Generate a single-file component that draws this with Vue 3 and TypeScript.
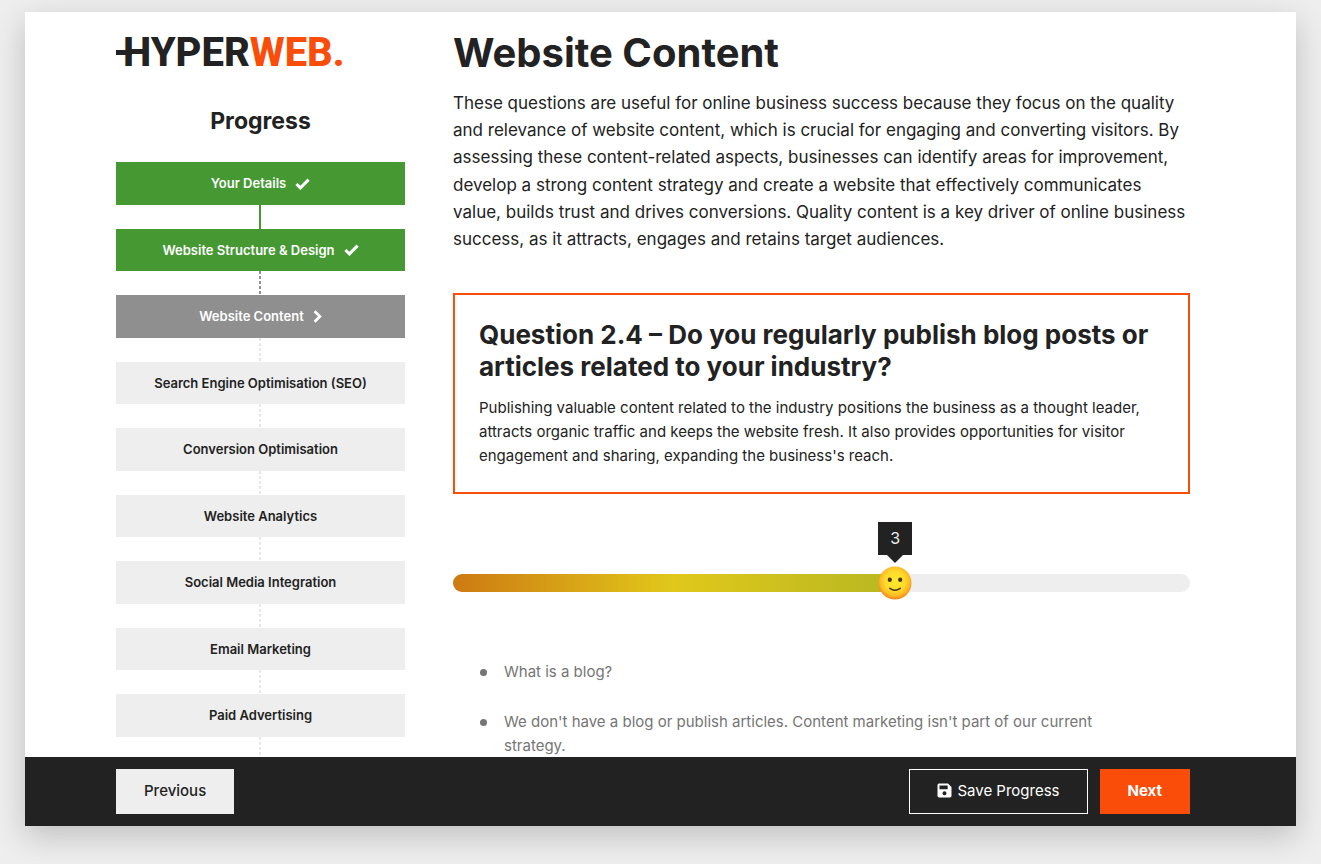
<script setup lang="ts">
import { computed, ref } from 'vue'

type Status = 'done' | 'current' | 'todo'

interface Step {
  label: string
  status: Status
}

const steps: Step[] = [
  { label: 'Your Details', status: 'done' },
  { label: 'Website Structure & Design', status: 'done' },
  { label: 'Website Content', status: 'current' },
  { label: 'Search Engine Optimisation (SEO)', status: 'todo' },
  { label: 'Conversion Optimisation', status: 'todo' },
  { label: 'Website Analytics', status: 'todo' },
  { label: 'Social Media Integration', status: 'todo' },
  { label: 'Email Marketing', status: 'todo' },
  { label: 'Paid Advertising', status: 'todo' },
]

const answers: string[] = [
  'What is a blog?',
  "We don't have a blog or publish articles. Content marketing isn't part of our current strategy.",
]

const maxScore = 5
const score = ref(3)
const percent = computed(() => `${(score.value / maxScore) * 100}%`)
</script>

<template>
  <div class="page">
    <div class="card">
      <div class="content">
        <aside class="sidebar">
          <a class="logo" href="#" aria-label="Hyperweb home">HYPER<span class="logo-accent">WEB.</span></a>
          <h2 class="progress-title">Progress</h2>
          <ol class="steps">
            <li v-for="step in steps" :key="step.label" class="step" :class="step.status">
              <a class="step-link" href="#">
                <span>{{ step.label }}</span>
                <svg v-if="step.status === 'done'" class="tick" viewBox="0 0 15 12" aria-hidden="true">
                  <path d="M1.4 6 5.4 9.9 13.6 1.7" fill="none" stroke="currentColor" stroke-width="3.1" />
                </svg>
                <svg v-else-if="step.status === 'current'" class="chevron" viewBox="0 0 9 13" aria-hidden="true">
                  <path d="M1.6 1.3 6.9 6.5 1.6 11.7" fill="none" stroke="currentColor" stroke-width="2.7" />
                </svg>
              </a>
            </li>
          </ol>
        </aside>

        <main class="main">
          <h1 class="title">Website Content</h1>
          <p class="intro">
            These questions are useful for online business success because they focus on the quality
            and relevance of website content, which is crucial for engaging and converting visitors. By
            assessing these content-related aspects, businesses can identify areas for improvement,
            develop a strong content strategy and create a website that effectively communicates
            value, builds trust and drives conversions. Quality content is a key driver of online business
            success, as it attracts, engages and retains target audiences.
          </p>

          <section class="question">
            <h2 id="question-title">Question 2.4 – Do you regularly publish blog posts or articles related to your industry?</h2>
            <p>
              Publishing valuable content related to the industry positions the business as a thought leader,
              attracts organic traffic and keeps the website fresh. It also provides opportunities for visitor
              engagement and sharing, expanding the business's reach.
            </p>
          </section>

          <div class="slider" :style="{ '--value': percent }">
            <input
              v-model.number="score"
              class="range"
              type="range"
              min="0"
              :max="maxScore"
              aria-labelledby="question-title"
            />
            <output class="bubble">{{ score }}</output>
            <svg class="face" viewBox="0 0 34 34" aria-hidden="true">
              <defs>
                <radialGradient id="skin" cx="50%" cy="44%" r="54%">
                  <stop offset="0" stop-color="#ffe92e" />
                  <stop offset="0.55" stop-color="#ffdb2c" />
                  <stop offset="0.82" stop-color="#fdbb25" />
                  <stop offset="1" stop-color="#f58a1c" />
                </radialGradient>
              </defs>
              <circle cx="17" cy="17" r="16.5" fill="url(#skin)" />
              <ellipse cx="11.8" cy="13.8" rx="2.1" ry="2.3" fill="#4a3306" />
              <ellipse cx="22.2" cy="13.8" rx="2.1" ry="2.3" fill="#4a3306" />
              <path d="M11.8 22.3Q17 26 22.2 22.3" fill="none" stroke="#4a3306" stroke-width="1.5" stroke-linecap="round" />
            </svg>
          </div>

          <ul class="answers">
            <li v-for="answer in answers" :key="answer">{{ answer }}</li>
          </ul>
        </main>
      </div>

      <footer class="footer">
        <button class="button previous" type="button">Previous</button>
        <div class="actions">
          <button class="button save" type="button">
            <svg class="disk" viewBox="0 0 15 15" aria-hidden="true">
              <path
                fill="currentColor"
                fill-rule="evenodd"
                d="M2 .5H11L14.5 4V13A1.6 1.6 0 0 1 13 14.5H2A1.6 1.6 0 0 1 .5 13V2A1.6 1.6 0 0 1 2 .5ZM2.5 2.5V6.2H10.7V2.5ZM7.5 8.3A2 2 0 1 0 7.5 12.3A2 2 0 1 0 7.5 8.3Z"
              />
            </svg>
            Save Progress
          </button>
          <button class="button next" type="button">Next</button>
        </div>
      </footer>
    </div>
  </div>
</template>

<style>
body {
  margin: 0;
  background: #eee;
}
</style>

<style scoped>
* {
  box-sizing: border-box;
}

.page {
  height: 100vh;
  padding: 12px 25px 38px;
  overflow: hidden;
  background: #eee;
  color: #222;
  font-family: Inter, "Liberation Sans", sans-serif;
}

.card {
  display: flex;
  flex-direction: column;
  height: 100%;
  background: #fff;
  box-shadow: 0 10px 30px rgba(0, 0, 0, 0.2);
}

.content {
  flex: 1;
  min-height: 0;
  display: grid;
  grid-template-columns: 289fr 737fr;
  align-items: start;
  gap: 48px;
  padding: 17px 106px 0 91px;
  overflow: hidden;
}

h1,
h2,
p,
ol,
ul {
  margin: 0;
  padding: 0;
}

.logo {
  position: relative;
  display: block;
  padding-left: 7px;
  color: #222;
  font: 800 40px/48px Roboto, "Liberation Sans", sans-serif;
  text-decoration: none;
  white-space: nowrap;
}

.logo::before {
  content: "";
  position: absolute;
  top: 21px;
  left: 0;
  width: 16px;
  height: 5px;
  background: #222;
}

.logo-accent {
  color: #fa4d09;
}

.progress-title {
  margin: 29px 0 26px;
  font-size: 23px;
  line-height: 30px;
  text-align: center;
}

.steps {
  list-style: none;
}

.step::after {
  content: "";
  display: block;
  width: 2px;
  height: 24px;
  margin-left: calc(50% - 2px);
  background: repeating-linear-gradient(#e8e8e8 0 3px, transparent 3px 5px);
}

.step.done::after {
  background: #459832;
}

.step.done:has(+ .current)::after {
  background: repeating-linear-gradient(#8f8f8f 0 3px, transparent 3px 5px);
}

.step-link {
  display: flex;
  align-items: center;
  justify-content: center;
  gap: 9px;
  padding: 12px 12px 11px;
  background: #eee;
  color: #222;
  font-size: 13px;
  font-weight: 600;
  line-height: 1.5;
  text-decoration: none;
}

.done .step-link {
  background: #459832;
  color: #fff;
}

.current .step-link {
  background: #8f8f8f;
  color: #fff;
}

.tick {
  width: 15px;
  height: 12px;
}

.chevron {
  width: 9px;
  height: 13px;
}

.title {
  font-size: 40px;
  line-height: 48px;
}

.intro {
  margin: 13px 0 40px;
  font-size: 17px;
  line-height: 1.6;
}

.question {
  padding: 24px;
  border: 2px solid #f94d0b;
}

.question h2 {
  margin-bottom: 13px;
  font-size: 26px;
  line-height: 32px;
}

.question p {
  font-size: 15px;
  line-height: 24px;
}

.slider {
  position: relative;
  height: 18px;
  margin: 80px 0 68px;
}

.range {
  display: block;
  width: 100%;
  height: 18px;
  margin: 0;
  appearance: none;
  border-radius: 9px;
  background:
    linear-gradient(90deg, transparent var(--value), #eee var(--value)),
    linear-gradient(90deg, #cd7a12, #e1c81b 30%, #b8b722 60%, #459832);
  cursor: pointer;
}

.range::-webkit-slider-thumb {
  appearance: none;
  width: 34px;
  height: 34px;
  background: transparent;
}

.bubble {
  position: absolute;
  bottom: 37px;
  left: var(--value);
  width: 34px;
  background: #222;
  color: #eee;
  font-size: 16px;
  line-height: 33px;
  text-align: center;
  transform: translateX(-50%);
  pointer-events: none;
}

.bubble::after {
  content: "";
  position: absolute;
  top: 100%;
  left: 50%;
  border: 8px solid transparent;
  border-top-color: #222;
  border-bottom: 0;
  transform: translateX(-50%);
}

.face {
  position: absolute;
  top: 50%;
  left: var(--value);
  width: 34px;
  height: 34px;
  transform: translate(-50%, -50%);
  pointer-events: none;
}

.answers {
  display: grid;
  gap: 26px;
  padding: 0 64px 0 51px;
  list-style: none;
  color: #757575;
  font-size: 15px;
  line-height: 24px;
}

.answers li {
  position: relative;
}

.answers li::before {
  content: "";
  position: absolute;
  top: 9px;
  left: -24px;
  width: 7px;
  height: 7px;
  border-radius: 50%;
  background: #757575;
}

.footer {
  display: flex;
  justify-content: space-between;
  padding: 12px 106px 12px 91px;
  background: #222;
}

.actions {
  display: flex;
  gap: 12px;
}

.button {
  display: flex;
  align-items: center;
  gap: 5px;
  height: 45px;
  padding: 0 28px 2px;
  border: 0;
  font-family: inherit;
  font-size: 15px;
  cursor: pointer;
}

.previous {
  background: #eee;
  color: #222;
  font-weight: 500;
}

.save {
  padding: 0 27px 2px;
  border: 1px solid #fff;
  background: transparent;
  color: #fff;
}

.disk {
  width: 15px;
  height: 15px;
}

.next {
  background: #fa4d09;
  color: #fff;
  font-weight: 700;
}
</style>
